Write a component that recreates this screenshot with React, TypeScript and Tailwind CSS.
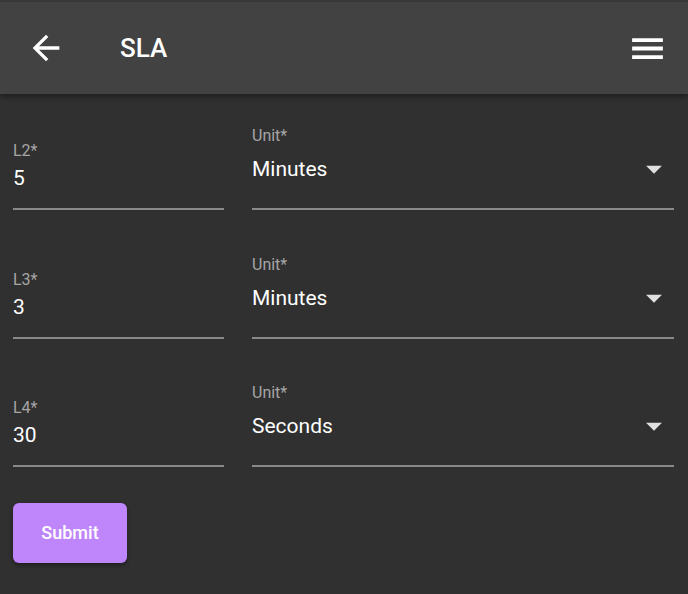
import React from 'react'

interface SlaRow {
  level: string
  value: string
  unit: string
}

const rows: SlaRow[] = [
  { level: 'L2*', value: '5', unit: 'Minutes' },
  { level: 'L3*', value: '3', unit: 'Minutes' },
  { level: 'L4*', value: '30', unit: 'Seconds' },
]

function ArrowBack() {
  return (
    <svg viewBox="0 0 24 24" className="w-[40px] h-[40px]" fill="#ffffff">
      <path d="M20 11H7.83l5.59-5.59L12 4l-8 8 8 8 1.41-1.41L7.83 13H20v-2z" />
    </svg>
  )
}

function MenuIcon() {
  return (
    <svg viewBox="0 0 24 24" className="w-[41px] h-[41px]" fill="#ffffff">
      <path d="M3 18.2h18v-2.2H3v2.2zm0-5.1h18v-2.2H3v2.2zm0-7.1v2.2h18V6H3z" />
    </svg>
  )
}

function DropArrow() {
  return (
    <svg viewBox="0 0 24 24" className="w-[38px] h-[38px]" fill="#e0e0e0">
      <path d="M7 10l5 5 5-5z" />
    </svg>
  )
}

export default function App() {
  return (
    <div
      className="w-[688px] h-[594px] bg-[#303030] overflow-hidden flex flex-col"
      style={{ fontFamily: 'Roboto, "Noto Sans", sans-serif' }}
    >
      {/* header */}
      <div className="h-[94px] bg-[#424242] border-t-2 border-[#383838] shadow-[0_3px_5px_rgba(0,0,0,0.35)] flex items-center px-[26px] relative z-10">
        <ArrowBack />
        <h1 className="ml-[54px] text-[26px] font-medium text-white">SLA</h1>
        <div className="ml-auto mr-[-6px]">
          <MenuIcon />
        </div>
      </div>

      {/* form */}
      <div className="px-[13px] pt-[32px] flex flex-col gap-[44.5px]">
        {rows.map((row) => (
          <div key={row.level} className="flex items-end gap-[28px]">
            <div className="w-[211px] flex flex-col border-b-2 border-[#8a8a8a] pb-[17px]">
              <span className="text-[16px] leading-[19px] text-[#a6a6a6]">{row.level}</span>
              <span className="mt-[6px] text-[21px] leading-[25px] text-white">{row.value}</span>
            </div>
            <div className="w-[422px] flex flex-col border-b-2 border-[#8a8a8a] pb-[26px]">
              <span className="text-[16px] leading-[19px] text-[#a6a6a6]">Unit*</span>
              <div className="mt-[12px] flex items-center justify-between h-[25px]">
                <span className="text-[21px] leading-[25px] text-white">{row.unit}</span>
                <div className="mr-[1px] -mt-[1px]">
                  <DropArrow />
                </div>
              </div>
            </div>
          </div>
        ))}

        <button className="-mt-[9px] w-[114px] h-[60px] rounded-[6px] bg-[#bf86fc] text-white text-[18px] font-medium shadow-[0_2px_4px_rgba(0,0,0,0.4)]">
          Submit
        </button>
      </div>
    </div>
  )
}
